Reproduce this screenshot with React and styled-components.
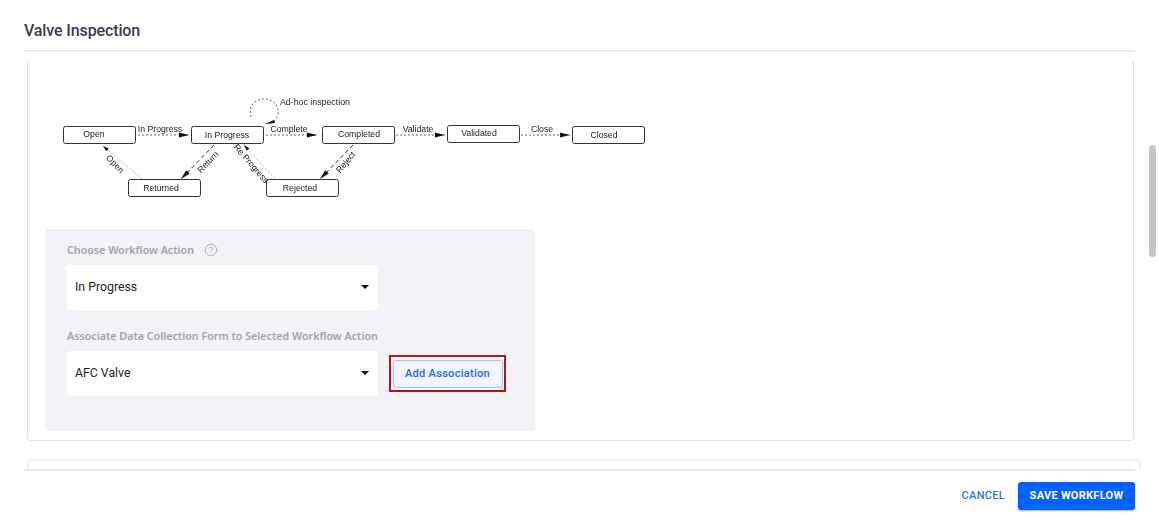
import React from 'react';
import styled, { createGlobalStyle } from 'styled-components';
import { CircleHelp } from 'lucide-react';

const GlobalStyle = createGlobalStyle`
  html, body {
    margin: 0;
    padding: 0;
    background: #fff;
    font-family: Roboto, "Liberation Sans", sans-serif;
  }
`;

const Page = styled.div`
  width: 1159px;
  height: 531px;
  overflow: hidden;
  position: relative;
  box-sizing: border-box;
  padding: 0 24px;
  display: flex;
  flex-direction: column;
  background: #fff;
`;

const Header = styled.div`
  height: 52px;
  flex: none;
  box-sizing: border-box;
  padding-top: 21px;
  border-bottom: 2px solid #e8e8ef;
`;

const Title = styled.h1`
  margin: 0;
  font-size: 16px;
  line-height: 19px;
  font-weight: 500;
  letter-spacing: -0.12px;
  color: #3a3a50;
`;

const Content = styled.div`
  height: 418px;
  flex: none;
  overflow: hidden;
  margin-right: -8px;
  padding: 8px 0 0 3px;
  box-sizing: border-box;
`;

const Card = styled.div`
  width: 1107px;
  height: 381px;
  box-sizing: border-box;
  border: 1px solid #e2e2e6;
  border-top: 0;
  border-radius: 0 0 4px 4px;
  padding: 169px 0 0 17px;
  position: relative;
`;

const NextCard = styled.div`
  width: 1114px;
  height: 30px;
  margin-top: 18px;
  box-sizing: border-box;
  border: 2px solid #eeeef2;
  border-radius: 5px 5px 0 0;
`;

const Diagram = styled.svg`
  position: absolute;
  left: 0;
  top: 0;
  filter: blur(0.4px);
`;

const Panel = styled.div`
  width: 490px;
  height: 202px;
  box-sizing: border-box;
  padding: 12px 22px;
  background: #f2f2f7;
  border-radius: 4px;
`;

const Label = styled.div`
  display: flex;
  align-items: center;
  gap: 10px;
  height: 17px;
  font-family: "Noto Sans", "Open Sans", sans-serif;
  font-size: 10.7px;
  font-weight: 600;
  color: #a2a2ac;
  white-space: nowrap;
`;

const Row = styled.div`
  display: flex;
  align-items: center;
  gap: 11px;
  margin: 7px 0 17px;
`;

const Select = styled.div`
  width: 311px;
  height: 45px;
  box-sizing: border-box;
  padding: 0 9px 2px 8px;
  display: flex;
  align-items: center;
  justify-content: space-between;
  background: #fff;
  border-radius: 3px;
  font-size: 12.3px;
  color: #1d1d22;
`;

const Caret = styled.span`
  width: 0;
  height: 0;
  border-left: 4px solid transparent;
  border-right: 4px solid transparent;
  border-top: 4px solid #111;
`;

const Highlight = styled.div`
  width: 117px;
  height: 37px;
  box-sizing: border-box;
  border: 2px solid #b3151c;
  display: flex;
  align-items: center;
  justify-content: center;
`;

const AddButton = styled.button`
  width: 110px;
  height: 28px;
  padding: 0;
  box-sizing: border-box;
  border: 1px solid #a6c3f7;
  border-radius: 3px;
  background: #f1f5fd;
  color: #1c69f5;
  font-family: Roboto, sans-serif;
  font-size: 11px;
  font-weight: 500;
  letter-spacing: 0.3px;
`;

const Footer = styled.div`
  flex: none;
  border-top: 2px solid #e8e8ef;
  margin-top: -1px;
  padding-top: 11px;
  display: flex;
  justify-content: flex-end;
  align-items: center;
  gap: 13px;
`;

const CancelButton = styled.button`
  border: 0;
  padding: 0 0 2px;
  background: none;
  color: #2f74f6;
  font-family: Roboto, sans-serif;
  font-size: 11px;
  font-weight: 500;
  letter-spacing: 0.3px;
`;

const SaveButton = styled.button`
  width: 117px;
  height: 28px;
  padding: 0 0 2px;
  border: 0;
  border-radius: 3px;
  background: #0062ff;
  color: #fff;
  font-family: Roboto, sans-serif;
  font-size: 11px;
  font-weight: 700;
  letter-spacing: 0.3px;
  box-shadow: 0 1px 2px rgba(0, 0, 0, 0.3);
`;

const ScrollThumb = styled.div`
  position: absolute;
  left: 1149px;
  top: 145px;
  width: 7px;
  height: 112px;
  border-radius: 4px;
  background: #c6c6c6;
`;

// diagram coords are relative to the card (page x - 28, page y - 60)
// dx/dy: the labels in the drawing are not quite centred in their boxes
const nodes = [
  { label: 'Open', x: 35, y: 66, dx: -5, dy: -1 },
  { label: 'In Progress', x: 163, y: 66, dx: 0, dy: 0 },
  { label: 'Completed', x: 294, y: 66, dx: 1, dy: -1 },
  { label: 'Validated', x: 419, y: 65, dx: -4, dy: -1 },
  { label: 'Closed', x: 544, y: 66, dx: -4, dy: 0 },
  { label: 'Returned', x: 100, y: 119, dx: -3, dy: 0 },
  { label: 'Rejected', x: 238, y: 119, dx: -2, dy: 0 },
];

const edges = [
  { x1: 110, y1: 75, x2: 161, y2: 75, kind: 'dots' },
  { x1: 238, y1: 75, x2: 289, y2: 75, kind: 'dots' },
  { x1: 368, y1: 75, x2: 417, y2: 75, kind: 'dots' },
  { x1: 493, y1: 75, x2: 542, y2: 75, kind: 'dots' },
  { x1: 186, y1: 85, x2: 153, y2: 119, kind: 'dash' },
  { x1: 325, y1: 85, x2: 292, y2: 119, kind: 'dash' },
  { x1: 114, y1: 119, x2: 75, y2: 86, kind: 'thin' },
  { x1: 247, y1: 119, x2: 216, y2: 85, kind: 'thin' },
];

const edgeLabels = [
  { text: 'In Progress', x: 132, y: 72 },
  { text: 'Complete', x: 261, y: 72 },
  { text: 'Validate', x: 390, y: 72 },
  { text: 'Close', x: 514, y: 72 },
  { text: 'Open', x: 85, y: 106, rotate: 46 },
  { text: 'Return', x: 182, y: 104, rotate: -46 },
  { text: 'Re Progress', x: 221, y: 105.5, rotate: 49 },
  { text: 'Reject', x: 320, y: 104, rotate: -50 },
];

const dashFor = { dots: '2 2', dash: '4 3', thin: '1 1' };
const strokeFor = { dots: '#666', dash: '#333', thin: '#999' };

function arrowHead(x1, y1, x2, y2, kind) {
  const a = Math.atan2(y2 - y1, x2 - x1);
  const len = kind === 'thin' ? 6 : 10;
  const w = kind === 'thin' ? 1.8 : 2.4;
  const bx = x2 - len * Math.cos(a);
  const by = y2 - len * Math.sin(a);
  const nx = -Math.sin(a) * w;
  const ny = Math.cos(a) * w;
  return `${x2},${y2} ${bx + nx},${by + ny} ${bx - nx},${by - ny}`;
}

function WorkflowDiagram() {
  return (
    <Diagram width="640" height="150" viewBox="0 0 640 150" fontFamily="Liberation Sans, Arial, sans-serif" fontSize="8.7" fill="#222">
      {edges.map((e) => (
        <g key={`${e.x1}-${e.y1}`}>
          <line
            x1={e.x1}
            y1={e.y1}
            x2={e.x2}
            y2={e.y2}
            stroke={strokeFor[e.kind]}
            strokeWidth={e.kind === 'thin' ? 0.8 : 1}
            strokeDasharray={dashFor[e.kind]}
          />
          <polygon points={arrowHead(e.x1, e.y1, e.x2, e.y2, e.kind)} fill="#111" />
        </g>
      ))}
      <path d="M223 57 C220 44 228 39 236 39 C245 39 251 45 250 54 Q249 60 246 61" fill="none" stroke="#666" strokeDasharray="2 2" />
      <polygon points="237,64 246,60 247,63" fill="#111" />
      <text x="252" y="45" fontSize="8.8">Ad-hoc inspection</text>
      {nodes.map((n) => (
        <g key={n.label}>
          <rect x={n.x + 0.5} y={n.y + 0.5} width="72" height="17" rx="2" fill="#fff" stroke="#333" />
          <text x={n.x + 36 + n.dx} y={n.y + 12 + n.dy} textAnchor="middle">{n.label}</text>
        </g>
      ))}
      {edgeLabels.map((l) => (
        <text
          key={l.text + l.x}
          x={l.x}
          y={l.y}
          textAnchor="middle"
          transform={l.rotate ? `rotate(${l.rotate} ${l.x} ${l.y})` : undefined}
        >
          {l.text}
        </text>
      ))}
    </Diagram>
  );
}

export default function App() {
  return (
    <Page>
      <GlobalStyle />
      <Header>
        <Title>Valve Inspection</Title>
      </Header>
      <Content>
        <Card>
          <WorkflowDiagram />
          <Panel>
            <Label>
              Choose Workflow Action
              <CircleHelp size={14} strokeWidth={1.5} color="#a4a4ae" />
            </Label>
            <Row>
              <Select>
                In Progress
                <Caret />
              </Select>
            </Row>
            <Label>Associate Data Collection Form to Selected Workflow Action</Label>
            <Row>
              <Select>
                AFC Valve
                <Caret />
              </Select>
              <Highlight>
                <AddButton>Add Association</AddButton>
              </Highlight>
            </Row>
          </Panel>
        </Card>
        <NextCard />
      </Content>
      <Footer>
        <CancelButton>CANCEL</CancelButton>
        <SaveButton>SAVE WORKFLOW</SaveButton>
      </Footer>
      <ScrollThumb />
    </Page>
  );
}
